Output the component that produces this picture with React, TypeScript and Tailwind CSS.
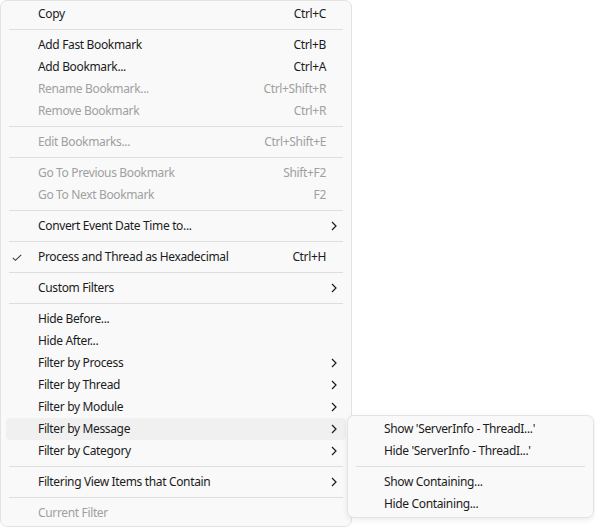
import React from 'react';

type Item =
  | { kind: 'sep' }
  | {
      kind: 'item';
      label: string;
      shortcut?: string;
      disabled?: boolean;
      sub?: boolean;
      checked?: boolean;
      active?: boolean;
    };

const mainItems: Item[] = [
  { kind: 'item', label: 'Copy', shortcut: 'Ctrl+C' },
  { kind: 'sep' },
  { kind: 'item', label: 'Add Fast Bookmark', shortcut: 'Ctrl+B' },
  { kind: 'item', label: 'Add Bookmark...', shortcut: 'Ctrl+A' },
  { kind: 'item', label: 'Rename Bookmark...', shortcut: 'Ctrl+Shift+R', disabled: true },
  { kind: 'item', label: 'Remove Bookmark', shortcut: 'Ctrl+R', disabled: true },
  { kind: 'sep' },
  { kind: 'item', label: 'Edit Bookmarks...', shortcut: 'Ctrl+Shift+E', disabled: true },
  { kind: 'sep' },
  { kind: 'item', label: 'Go To Previous Bookmark', shortcut: 'Shift+F2', disabled: true },
  { kind: 'item', label: 'Go To Next Bookmark', shortcut: 'F2', disabled: true },
  { kind: 'sep' },
  { kind: 'item', label: 'Convert Event Date Time to...', sub: true },
  { kind: 'sep' },
  { kind: 'item', label: 'Process and Thread as Hexadecimal', shortcut: 'Ctrl+H', checked: true },
  { kind: 'sep' },
  { kind: 'item', label: 'Custom Filters', sub: true },
  { kind: 'sep' },
  { kind: 'item', label: 'Hide Before...' },
  { kind: 'item', label: 'Hide After...' },
  { kind: 'item', label: 'Filter by Process', sub: true },
  { kind: 'item', label: 'Filter by Thread', sub: true },
  { kind: 'item', label: 'Filter by Module', sub: true },
  { kind: 'item', label: 'Filter by Message', sub: true, active: true },
  { kind: 'item', label: 'Filter by Category', sub: true },
  { kind: 'sep' },
  { kind: 'item', label: 'Filtering View Items that Contain', sub: true },
  { kind: 'sep' },
  { kind: 'item', label: 'Current Filter', disabled: true },
];

const subItems: Item[] = [
  { kind: 'item', label: "Show 'ServerInfo - ThreadI...'" },
  { kind: 'item', label: "Hide 'ServerInfo - ThreadI...'" },
  { kind: 'sep' },
  { kind: 'item', label: 'Show Containing...' },
  { kind: 'item', label: 'Hide Containing...' },
];

const Chevron = () => (
  <svg width="6" height="10" viewBox="0 0 6 10" className="absolute right-[9px] top-[6px]">
    <polyline points="1,1 5,5 1,9" fill="none" stroke="#1b1b1b" strokeWidth="1.2" />
  </svg>
);

const Check = () => (
  <svg width="10" height="8" viewBox="0 0 10 8" className="absolute left-[6px] top-[8px]">
    <polyline points="0.8,3.8 3.4,6.3 9.2,0.8" fill="none" stroke="#3a3a3a" strokeWidth="1.1" />
  </svg>
);

const Menu = ({ items, textLeft }: { items: Item[]; textLeft: string }) => (
  <div className="flex flex-col py-[2px]">
    {items.map((it, i) =>
      it.kind === 'sep' ? (
        <div key={i} className="h-[9px] flex items-center px-[8px]">
          <div className="h-px w-full bg-[#dedede]" />
        </div>
      ) : (
        <div
          key={i}
          className={`relative mx-[5px] h-[22px] flex items-center rounded-[4px] ${textLeft} pr-[20px] ${
            it.active ? 'bg-[#f0f0f0]' : ''
          } ${it.disabled ? 'text-[#a0a0a0]' : 'text-[#1b1b1b]'}`}
        >
          {it.checked && <Check />}
          <span className="flex-1 whitespace-nowrap">{it.label}</span>
          {it.shortcut && <span className="whitespace-nowrap">{it.shortcut}</span>}
          {it.sub && <Chevron />}
        </div>
      )
    )}
  </div>
);

export default function App() {
  return (
    <div
      className="relative w-[595px] h-[527px] bg-white overflow-hidden text-[12px] leading-none tracking-[-0.35px]"
      style={{ fontFamily: '"Noto Sans", "Open Sans", sans-serif' }}
    >
      <div className="w-[352px] bg-[#f9f9f9] border border-[#e3e3e3] rounded-[7px]">
        <Menu items={mainItems} textLeft="pl-[32px]" />
      </div>

      {/* submenu for Filter by Message */}
      <div className="absolute left-[347px] top-[415px] w-[247px] bg-[#f9f9f9] border border-[#e3e3e3] rounded-[7px] shadow-[0_2px_6px_rgba(0,0,0,0.08)]">
        <Menu items={subItems} textLeft="pl-[31px]" />
      </div>
    </div>
  );
}
